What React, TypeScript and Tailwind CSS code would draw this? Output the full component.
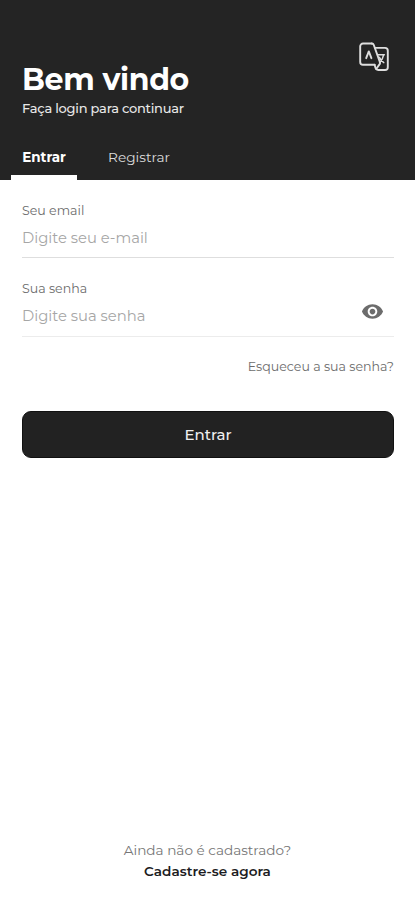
import React, { useState } from 'react';
import { MdVisibility } from 'react-icons/md';

const TranslateIcon: React.FC = () => (
  <svg width="30" height="30" viewBox="0 0 30 30" fill="none" stroke="#dedede" strokeWidth="1.9" strokeLinejoin="round" strokeLinecap="round">
    {/* Left card */}
    <path d="M12.8 1.5H4A2.8 2.8 0 0 0 1.2 4.3V20A2.8 2.8 0 0 0 4 22.8H15.6" />
    <path d="M12.8 1.5A2.2 2.2 0 0 1 14.8 3L21 20.4" />
    {/* Right card */}
    <path d="M16.2 5.9H26A2.8 2.8 0 0 1 28.8 8.7V25.2A2.8 2.8 0 0 1 26 28H19.2A2.8 2.8 0 0 1 16.6 26.2L15.6 22.8" />
    <path d="M17.2 27L21 21.6" />
    {/* Letter marks */}
    <path d="M7.2 16.2L9.8 9.4L12.4 16.2" />
    <path d="M18.6 12.8H25.4M24.6 12.8C24 16.4 22.4 18.8 20.6 20.8M20.4 15.4C21.4 17.6 22.8 19.4 24.8 20.6" strokeWidth="1.5" />
  </svg>
);

const App: React.FC = () => {
  const [showPassword, setShowPassword] = useState(false);

  return (
    <div className="flex flex-col w-full h-screen bg-white overflow-hidden font-['Montserrat','Inter',sans-serif]">
      {/* Header */}
      <header className="flex flex-col justify-between h-[180px] bg-[#242424] text-white shrink-0">
        <div className="flex items-start justify-between pl-[22px] pr-[26px] pt-[42px]">
          <div className="pt-[19px]">
            <h1 className="text-[30px] leading-[37px] font-bold tracking-[-0.35px] whitespace-nowrap">Bem vindo</h1>
            <p className="text-[13px] leading-5 font-medium text-[#e8e8e8] tracking-[-0.25px] whitespace-nowrap">Faça login para continuar</p>
          </div>
          <button type="button" aria-label="Idioma">
            <TranslateIcon />
          </button>
        </div>

        {/* Tabs */}
        <nav className="flex pl-[11px]">
          <button type="button" className="h-[33px] w-[66px] border-b-[5px] border-white flex justify-center text-[13.5px] leading-5 font-bold">
            Entrar
          </button>
          <button type="button" className="h-[33px] ml-[31px] flex text-[13.7px] leading-5 text-[#dcdcdc]">
            Registrar
          </button>
        </nav>
      </header>

      {/* Login form */}
      <form className="flex flex-col pl-[22px] pr-[21px] pt-[21px]" onSubmit={(e) => e.preventDefault()}>
        <div className="flex flex-col h-[57px] border-b border-[#dedede]">
          <label htmlFor="email" className="text-[12.6px] leading-5 text-[#6c6c6c]">Seu email</label>
          <input
            id="email"
            type="email"
            placeholder="Digite seu e-mail"
            className="mt-[3px] h-7 w-full text-[14.8px] outline-none placeholder:text-[#a6a6a6]"
          />
        </div>

        <div className="flex flex-col h-[58px] mt-[21px] border-b border-[#ececec]">
          <label htmlFor="password" className="text-[12.6px] leading-5 text-[#6c6c6c]">Sua senha</label>
          <div className="flex items-center mt-[3px] h-7">
            <input
              id="password"
              type={showPassword ? 'text' : 'password'}
              placeholder="Digite sua senha"
              className="flex-1 h-7 text-[14.8px] outline-none placeholder:text-[#a6a6a6]"
            />
            <button type="button" aria-label="Mostrar senha" className="mr-[10px] mb-[9px] text-[#6c6c6c]" onClick={() => setShowPassword(!showPassword)}>
              <MdVisibility size={23} />
            </button>
          </div>
        </div>

        <a href="#" className="self-end mt-5 text-[12.6px] leading-5 text-[#6c6c6c] whitespace-nowrap">Esqueceu a sua senha?</a>

        <button type="submit" className="mt-[34px] h-[47px] pt-[2px] rounded-[9px] bg-[#222222] border border-[#111111] text-[15px] font-medium text-[#f0f0f0]">
          Entrar
        </button>
      </form>

      {/* Register link */}
      <footer className="mt-auto pb-[18px] flex flex-col items-center text-[13.6px] leading-[21px]">
        <span className="text-[#767676]">Ainda não é cadastrado?</span>
        <a href="#" className="font-semibold text-[#1c1c22]">Cadastre-se agora</a>
      </footer>
    </div>
  );
};

export default App;
